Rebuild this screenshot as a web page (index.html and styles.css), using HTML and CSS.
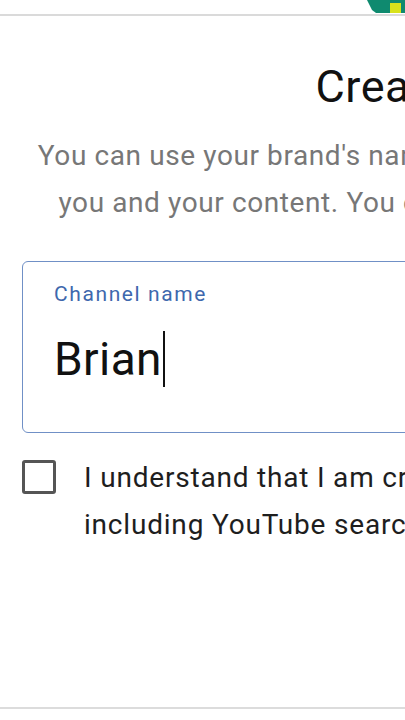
FILE: index.html
```html
<!DOCTYPE html>
<html lang="en">
<head>
<meta charset="utf-8">
<title>Create channel</title>
<link rel="stylesheet" href="styles.css">
</head>
<body>
<div class="topbar">
  <svg class="thumb" width="40" height="14" viewBox="0 0 40 14" aria-hidden="true">
    <polygon points="0,0 40,0 40,13 9,13 5,10" fill="#0f8a6f"/>
    <rect x="23" y="3" width="11" height="10" fill="#d8e21c"/>
  </svg>
</div>
<main class="dialog">
  <h1 class="title">Create a new channel</h1>
  <p class="intro">You can use your brand's name or another name. A channel name represents<br>you and your content. You can change your name at any time. Learn more</p>
  <div class="field">
    <label class="field-label" for="name">Channel name</label>
    <div class="field-value"><span id="name">Brian</span><span class="caret"></span></div>
  </div>
  <div class="consent">
    <span class="checkbox"></span>
    <p class="consent-text">I understand that I am creating a new Google Account with its own settings,<br>including YouTube search and watch history. Learn more</p>
  </div>
</main>
<div class="footer"></div>
</body>
</html>
```
FILE: styles.css
```css
html, body {
  margin: 0;
  padding: 0;
  background: #ffffff;
  overflow: hidden;
  width: 405px;
  height: 720px;
}
body {
  font-family: Roboto, "Noto Sans", Arial, sans-serif;
  display: flex;
  flex-direction: column;
}
.topbar {
  height: 14px;
  border-bottom: 2px solid #dadada;
  display: flex;
  justify-content: flex-end;
  overflow: hidden;
}
.thumb {
  margin-right: -2px;
  display: block;
}
.dialog {
  width: 1026px;
  padding: 47px 0 0 22px;
  flex: 1;
  display: flex;
  flex-direction: column;
}
.title {
  margin: 0;
  font-weight: 400;
  font-size: 45px;
  letter-spacing: 0.5px;
  line-height: 48px;
  color: #111111;
  text-align: center;
}
.intro {
  margin: 21px 0 0;
  font-size: 28px;
  letter-spacing: 0.6px;
  line-height: 47px;
  color: #777777;
  text-align: center;
  white-space: nowrap;
}
.field {
  margin-top: 35px;
  border: 1.5px solid #7090c6;
  border-radius: 6px;
  height: 172px;
  box-sizing: border-box;
  padding: 18px 31px 0;
}
.field-label {
  display: block;
  font-size: 21px;
  letter-spacing: 1.6px;
  line-height: 28px;
  color: #3e68ad;
}
.field-value {
  margin-top: 23px;
  font-size: 46px;
  letter-spacing: 0.4px;
  line-height: 56px;
  color: #111111;
  display: flex;
  align-items: center;
}
.caret {
  display: inline-block;
  width: 2px;
  height: 56px;
  background: #111111;
  margin-left: 1px;
}
.consent {
  margin-top: 27px;
  display: flex;
  align-items: flex-start;
  gap: 28px;
}
.checkbox {
  flex: none;
  width: 34px;
  height: 34px;
  box-sizing: border-box;
  border: 3px solid #555555;
  border-radius: 3px;
}
.consent-text {
  margin: -6px 0 0;
  font-size: 28px;
  letter-spacing: 0.8px;
  line-height: 47px;
  color: #1e1e1e;
  white-space: nowrap;
}
.footer {
  height: 11px;
  border-top: 2px solid #dcdcdc;
}
```
